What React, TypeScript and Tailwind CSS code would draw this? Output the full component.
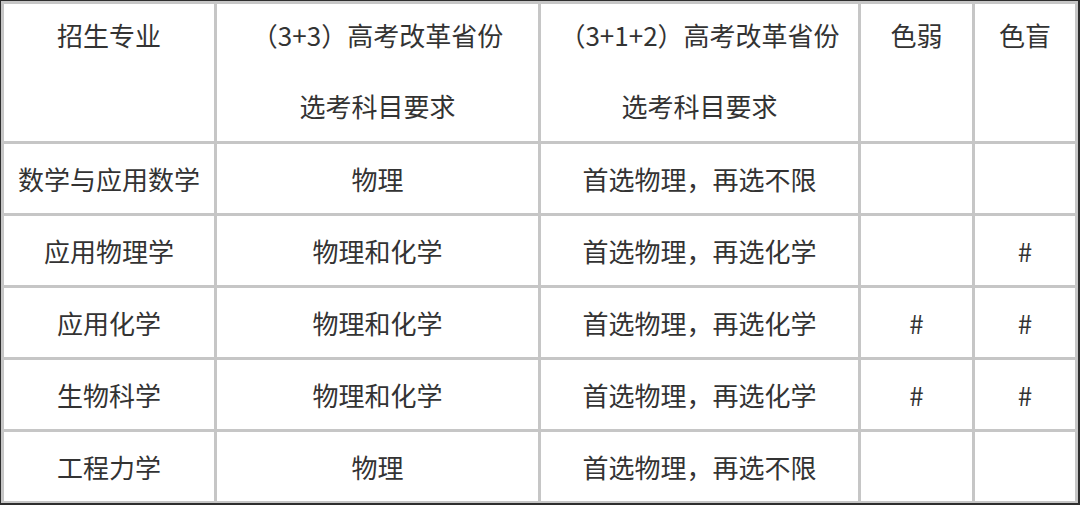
const rows: string[][] = [
  ["数学与应用数学", "物理", "首选物理，再选不限", "", ""],
  ["应用物理学", "物理和化学", "首选物理，再选化学", "", "#"],
  ["应用化学", "物理和化学", "首选物理，再选化学", "#", "#"],
  ["生物科学", "物理和化学", "首选物理，再选化学", "#", "#"],
  ["工程力学", "物理", "首选物理，再选不限", "", ""],
]

const head = "border-[3px] border-[#c6c6c6] align-top font-normal leading-[71px] p-0 whitespace-nowrap"

export default function App() {
  return (
    <div className="w-[1080px] h-[505px] bg-white border-t border-l border-r-2 border-b-2 border-[#2e2e2e] overflow-hidden">
      <table
        className="w-full table-fixed border-collapse text-[26px] text-[#333] text-center"
        style={{ fontFamily: '"Noto Sans CJK SC", "Noto Sans", sans-serif' }}
      >
        <colgroup>
          <col className="w-[213px]" />
          <col className="w-[324px]" />
          <col className="w-[320px]" />
          <col className="w-[114px]" />
          <col />
        </colgroup>
        <thead>
          <tr className="h-[139px]">
            <th className={head}>
              <div className="-mt-[5px]">招生专业</div>
            </th>
            <th className={head}>
              <div className="-mt-[5px]">
                （3+3）高考改革省份
                <br />
                选考科目要求
              </div>
            </th>
            <th className={head}>
              <div className="-mt-[5px]">
                （3+1+2）高考改革省份
                <br />
                选考科目要求
              </div>
            </th>
            <th className={head}>
              <div className="-mt-[5px]">色弱</div>
            </th>
            <th className={head}>
              <div className="-mt-[5px]">色盲</div>
            </th>
          </tr>
        </thead>
        <tbody>
          {rows.map((r, i) => (
            <tr key={i} className="h-[72px]">
              {r.map((c, j) => (
                <td
                  key={j}
                  className="border-[3px] border-[#c6c6c6] align-middle whitespace-nowrap p-0 leading-none"
                >
                  {c}
                </td>
              ))}
            </tr>
          ))}
        </tbody>
      </table>
    </div>
  )
}
